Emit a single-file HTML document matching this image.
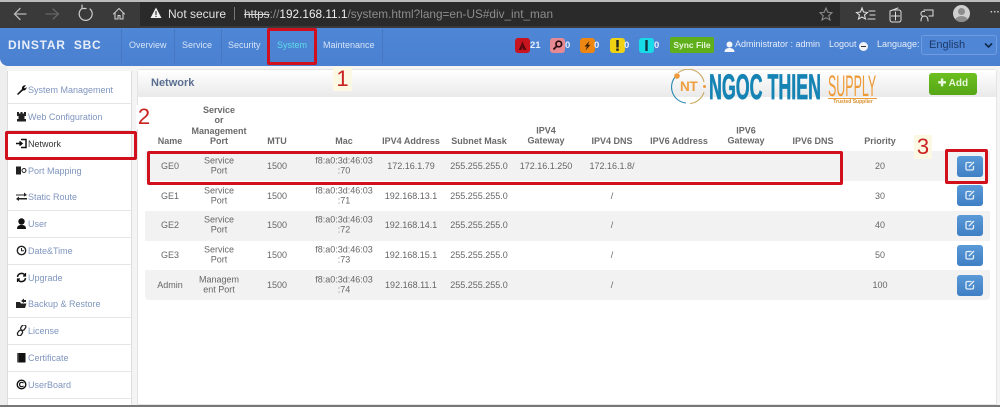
<!DOCTYPE html>
<html><head><meta charset="utf-8"><style>
html,body{margin:0;padding:0;background:#f4f4f4}
body{width:1000px;height:407px;position:relative;overflow:hidden}
#w{position:absolute;left:0;top:0;width:1000px;height:407px;overflow:hidden;background:#f4f4f4;font-family:"Liberation Sans",sans-serif;font-size:9px;color:#666;filter:blur(.35px)}
.a{position:absolute}
.c{position:absolute;transform:translate(-50%,-50%);text-align:center;white-space:nowrap;line-height:10.4px}
.h{font-weight:bold;color:#6a6a6a}
.n{position:absolute;top:40px;color:#d5e4f8;font-size:9px;white-space:nowrap}
.sep{position:absolute;top:29px;height:34px;width:1px;background:#4777c0}
.si{position:absolute;left:8px;width:123px;height:26px;background:#fff;border-bottom:1px solid #e6e6e6}
.si span{position:absolute;left:20px;top:8px;color:#7f95bf;font-size:9px;white-space:nowrap}
.si svg{position:absolute;left:8px;top:7px}
.bd{position:absolute;top:38px;width:15px;height:15px;border-radius:3px}
.bd svg{position:absolute;left:2px;top:2px}
.ct{position:absolute;top:40px;color:#e6eefa;font-size:9.500px;font-weight:bold}
.row{position:absolute;left:145px;width:845px;height:30px;background:#f2f2f2}
.btn{position:absolute;left:957px;width:26px;height:21px;border-radius:3px;background:linear-gradient(#5a9ad8,#3f7fc4)}
.btn svg{position:absolute;left:8px;top:5px}
.red{position:absolute;border:3px solid #d0101c;border-radius:2px;box-sizing:border-box}
.num{position:absolute;color:#c9231f;font-size:22px;line-height:24px;background:#fbf8e4;text-align:center}
</style></head><body><div id="w">

<!-- browser bar -->
<div class="a" style="left:0;top:0;width:1000px;height:2px;background:#bbb"></div>
<div class="a" style="left:0;top:2px;width:1000px;height:26px;background:#3a3a3a"></div>
<div class="a" style="left:140px;top:2px;width:700px;height:24px;background:#2a2a2a"></div>
<svg class="a" style="left:0;top:0" width="140" height="28" fill="none" stroke-linecap="round">
<path d="M26 14H15M20 8.500L14.500 14L20 19.500" stroke="#b8b8b8" stroke-width="1.300"/>
<path d="M46 14H58M53 9L58.500 14L53 19" stroke="#666" stroke-width="1.300"/>
<path d="M82 8.500A6.500 6.500 0 1 0 90 9M82 8.500V5M82 8.500H86" stroke="#ccc" stroke-width="1.200"/>
<path d="M113.500 14L119 8.500L124.500 14M115 13V19H118V15.500H120V19H123V13" stroke="#ccc" stroke-width="1.100"/>
</svg>
<svg class="a" style="left:150px;top:7px" width="12" height="12"><path d="M6 .5L11.500 11H.5Z" fill="#f2f2f2"/><rect x="5.400" y="4" width="1.200" height="4" fill="#333"/><rect x="5.400" y="8.800" width="1.200" height="1.200" fill="#333"/></svg>
<div class="a" style="left:168px;top:7px;font-size:12px;color:#e2e2e2;white-space:nowrap">Not secure</div>
<div class="a" style="left:234px;top:7px;width:1px;height:13px;background:#777"></div>
<div class="a" style="left:244px;top:7px;font-size:11.800px;color:#8d8d8d;white-space:nowrap"><span style="color:#d8d8d8;text-decoration:line-through">https</span>://<span style="color:#efefef">192.168.11.1</span>/system.html?lang=en-US#div_int_man</div>
<svg class="a" style="left:815px;top:3px" width="185" height="24" fill="none" stroke-linecap="round">
<path d="M11 5L12.800 9.300L17 9.800L13.800 12.700L15 17L11 14.700L7 17L8.200 12.700L5 9.800L9.200 9.300Z" stroke="#8a8a8a" stroke-width="1.100"/>
<path d="M47 5L48.500 9L52.500 9.500L49.500 12L50.500 16L47 14L43.500 16L44.500 12L41.500 9.500L45.500 9ZM54 8H60M55 12H60M53 16H60" stroke="#ddd" stroke-width="1.100"/>
<path d="M75 8.500V17C75 18 76 19 77 19H84C85 19 86 18 86 17V9C86 8 85 7 84 7H77M75 8L83 5M80.500 9V17M76.500 13H84.500" stroke="#ddd" stroke-width="1"/>
<path d="M109 7H118V13H114M106 18C106 14 108 13 109.500 13C111 13 113 14 113 18M109.500 8.500A2.500 2.500 0 1 0 109.500 13" stroke="#ddd" stroke-width="1"/>
</svg>
<div class="a" style="left:953px;top:5px;width:17px;height:17px;border-radius:50%;background:#cfcfcf;overflow:hidden"><div class="a" style="left:5px;top:3px;width:7px;height:7px;border-radius:50%;background:#8d8d8d"></div><div class="a" style="left:2px;top:11px;width:13px;height:9px;border-radius:50%;background:#8d8d8d"></div></div>
<div class="a" style="left:990px;top:7px;color:#ccc;font-size:10px;font-weight:bold">···</div>

<!-- blue header -->
<div class="a" style="left:0;top:28px;width:1000px;height:38px;background:linear-gradient(#4f86d6,#4a80cf);border-bottom-left-radius:8px"></div>
<div class="a" style="left:8px;top:38px;color:#e8eef8;font-size:12px;font-weight:bold;letter-spacing:.75px;white-space:nowrap">DINSTAR&nbsp;&nbsp;SBC</div>
<div class="sep" style="left:121px"></div><div class="sep" style="left:174px"></div><div class="sep" style="left:221px"></div><div class="sep" style="left:267px"></div><div class="sep" style="left:316px"></div><div class="sep" style="left:382px"></div>
<div class="n" style="left:129px">Overview</div>
<div class="n" style="left:182px">Service</div>
<div class="n" style="left:228px">Security</div>
<div class="n" style="left:277px;color:#5fdde8">System</div>
<div class="n" style="left:323px">Maintenance</div>

<div class="bd" style="left:515px;background:#c8141e"><svg width="11" height="11"><path d="M1.500 10L4 5L5.500 1L7 5L9.500 10H6.500L5.500 7.500L4.500 10Z" fill="#5a0a10"/></svg></div><div class="ct" style="left:530px">21</div>
<div class="bd" style="left:550px;background:#e58a92"><svg width="11" height="11" fill="none" stroke="#2a0a10" stroke-width="1.700"><circle cx="6.800" cy="4" r="2.800"/><path d="M4.800 6L1.500 9.500"/></svg></div><div class="ct" style="left:565px">0</div>
<div class="bd" style="left:580px;background:#ee8612"><svg width="11" height="11"><path d="M7.500 1L2.500 6.500H5L3.500 10.500L8.500 4.800H6Z" fill="#3a2006"/></svg></div><div class="ct" style="left:594px">0</div>
<div class="bd" style="left:610px;background:#efd312"><svg width="11" height="11"><rect x="4.300" y="0" width="2.400" height="7.500" fill="#222"/><rect x="4.300" y="8.500" width="2.400" height="2.400" fill="#222"/></svg></div><div class="ct" style="left:624px">0</div>
<div class="bd" style="left:639px;background:#18dbea"><svg width="11" height="11"><rect x="4.300" y="0" width="2.400" height="11" fill="#134"/></svg></div><div class="ct" style="left:654px">0</div>
<div class="a" style="left:670px;top:37px;width:44px;height:16px;border-radius:2px;background:#5fae1c;color:#e8f6d8;font-size:8.500px;font-weight:bold;line-height:16px;text-align:center">Sync File</div>
<svg class="a" style="left:724px;top:41px" width="11" height="12"><circle cx="5.500" cy="3.500" r="3" fill="#f4f6fa"/><path d="M.5 11C.5 8 3 7 5.500 7S10.500 8 10.500 11Z" fill="#f4f6fa"/></svg>
<div class="a" style="left:735px;top:39px;color:#e6eefa;font-size:9px;white-space:nowrap">Administrator : admin</div>
<div class="a" style="left:829px;top:39px;color:#e6eefa;font-size:9px">Logout</div>
<div class="a" style="left:859px;top:42px;width:9px;height:9px;border-radius:50%;background:#f0f4fa"><div class="a" style="left:2px;top:4px;width:5px;height:1px;background:#333"></div></div>
<div class="a" style="left:877px;top:39px;color:#e6eefa;font-size:9px">Language:</div>
<div class="a" style="left:921px;top:35px;width:76px;height:20px;box-sizing:border-box;border:1px solid #6f9ce0;border-radius:3px;background:#4f86d6;color:#1c3a6a;font-size:11px;line-height:19px;padding-left:7px">English
<svg class="a" style="left:62px;top:6px" width="9" height="7"><path d="M1 1.500L4.500 5L8 1.500" fill="none" stroke="#12284c" stroke-width="1.600"/></svg></div>

<!-- sidebar -->
<div class="a" style="left:0;top:66px;width:7px;height:341px;background:#eee"></div>
<div class="a" style="left:7px;top:71px;width:125px;height:334px;background:#fff;border-left:1px solid #ddd;border-right:1px solid #ddd;box-sizing:border-box"></div>
<div class="si" style="top:77px"><svg width="11" height="11"><path d="M1 10L6 5A3 3 0 0 1 10 1.500L8 3.500L9 4.500L10.500 3A3 3 0 0 1 7 6.500L2 11Z" fill="#111"/></svg><span>System Management</span></div>
<div class="si" style="top:104px"><svg width="11" height="11"><path d="M1 1H3V2.500H4.500V1H6.500V2.500H8V1H10V5H8.500V8H10V10.500H1V8H2.500V5H1Z" fill="#222"/></svg><span>Web Configuration</span></div>
<div class="si" style="top:131px"><svg width="11" height="11" fill="none" stroke="#111"><path d="M0 5.500H5M3.500 3.500L6 5.500L3.500 7.500" stroke-width="1.500"/><path d="M5 1.500H10V9.500H5" stroke-width="1.500"/></svg><span style="color:#333">Network</span></div>
<div class="si" style="top:158px"><svg width="11" height="11"><rect x="0" y="1.500" width="5" height="8" fill="#222"/><circle cx="8" cy="5.500" r="2" fill="none" stroke="#222"/></svg><span>Port Mapping</span></div>
<div class="si" style="top:184px"><svg width="11" height="11"><path d="M0 3.500H8V1.500L11 4L8 5.500V4.500H0ZM11 7H3V5.500L0 8L3 10V8.500H11Z" fill="#222"/></svg><span>Static Route</span></div>
<div class="si" style="top:211px"><svg width="11" height="11"><circle cx="5.500" cy="3.500" r="3.200" fill="#111"/><path d="M1 11C1 7.500 3 7 5.500 7S10 7.500 10 11Z" fill="#111"/></svg><span>User</span></div>
<div class="si" style="top:238px"><svg width="11" height="11" fill="none" stroke="#222"><circle cx="5.500" cy="5.500" r="4.200" stroke-width="1.400"/><path d="M5.500 3V5.800H8"/></svg><span>Date&amp;Time</span></div>
<div class="si" style="top:265px"><svg width="11" height="11" fill="none" stroke="#111" stroke-width="1.500"><path d="M1.500 5A4 4 0 0 1 9 3.500M9.500 6A4 4 0 0 1 2 7.500"/><path d="M9.500 1V4H7M1.500 10V7H4" stroke-width="1.200"/></svg><span>Upgrade</span></div>
<div class="si" style="top:291px"><svg width="11" height="11"><path d="M0 4H4L5 5.500H10.500L9 10H0ZM5 3L8 .5V2H10V4H8V5Z" fill="#222"/></svg><span>Backup &amp; Restore</span></div>
<div class="si" style="top:318px"><svg width="11" height="11" fill="none" stroke="#222" stroke-width="1.300"><rect x="5" y="-.5" width="4" height="6" rx="2" transform="rotate(35 7 3)"/><rect x="2" y="5" width="4" height="6" rx="2" transform="rotate(35 4 8)"/></svg><span>License</span></div>
<div class="si" style="top:345px"><svg width="11" height="11"><rect x="1" y="1" width="8.500" height="9.500" fill="#111"/><rect x="1" y="1" width="1.500" height="9.500" fill="#666"/></svg><span>Certificate</span></div>
<div class="si" style="top:372px"><svg width="11" height="11" fill="none" stroke="#111"><circle cx="5.500" cy="5.500" r="4.300" stroke-width="1.400"/><path d="M7.500 4.200A2.200 2.200 0 1 0 7.500 6.800" stroke-width="1.200"/></svg><span>UserBoard</span></div>

<!-- content panel -->
<div class="a" style="left:137px;top:69px;width:860px;height:336px;background:#fff;border:1px solid #e4e4e4;box-sizing:border-box;border-radius:3px 3px 0 0"></div>
<div class="a" style="left:138px;top:70px;width:858px;height:27px;background:linear-gradient(#fff,#e9e9e9)"></div>
<div class="a" style="left:151px;top:77px;color:#5a6f90;font-size:11px;font-weight:bold">Network</div>
<div class="a" style="left:0;top:405px;width:1000px;height:2px;background:#777"></div>

<!-- logo -->
<svg class="a" style="left:668px;top:69px" width="44" height="36" fill="none"><path d="M8 7A16 16 0 0 0 18 34" stroke="#2a86b0" stroke-width="1.100"/><path d="M10 4A16 16 0 0 1 36 13M36 23A16 16 0 0 1 22 34.500" stroke="#c9a860" stroke-width="1.100"/><circle cx="9" cy="7" r="2.800" fill="#ef9a3c"/><circle cx="36.500" cy="17.500" r="1.500" fill="#ef9a3c"/></svg>
<div class="a" style="left:680px;top:80px;color:#ef9e3e;font-size:13.500px;font-weight:bold;line-height:14px;letter-spacing:-.3px">NT</div>
<div class="a" style="left:709px;top:70px;color:#1583b4;font-size:35px;font-weight:bold;line-height:36px;transform-origin:0 0;transform:scaleX(.51);white-space:nowrap;-webkit-text-stroke:.7px #1583b4">NGOC THIEN</div>
<div class="a" style="left:828px;top:72px;color:#ee9a35;font-size:30px;line-height:30px;transform-origin:0 0;transform:scaleX(.415);white-space:nowrap">SUPPLY</div>
<div class="a" style="left:828px;top:98px;width:49px;height:1px;background:#ee9a35"></div>
<div class="a" style="left:828px;top:99px;color:#d8912f;font-size:5px;font-weight:bold;width:50px;text-align:center;white-space:nowrap;line-height:6px">Trusted Supplier</div>
<div class="a" style="left:929px;top:73px;width:48px;height:22px;border-radius:3px;background:linear-gradient(#6cc01e,#55a516);color:#eaf7dc;font-size:10px;font-weight:bold;line-height:22px;text-align:center">✚ Add</div>

<!-- table -->
<div class="row" style="top:151px"></div>
<div class="row" style="top:211px"></div>
<div class="row" style="top:270px;border-radius:0 0 4px 4px"></div>

<div class="c h" style="left:170px;top:141px">Name</div>
<div class="c h" style="left:219px;top:126px;line-height:10.400px">Service<br>or<br>Management<br>Port</div>
<div class="c h" style="left:277px;top:141px">MTU</div>
<div class="c h" style="left:344px;top:141px">Mac</div>
<div class="c h" style="left:411px;top:141px">IPV4 Address</div>
<div class="c h" style="left:479px;top:141px">Subnet Mask</div>
<div class="c h" style="left:546px;top:136px">IPV4<br>Gateway</div>
<div class="c h" style="left:612px;top:141px">IPV4 DNS</div>
<div class="c h" style="left:679px;top:141px">IPV6 Address</div>
<div class="c h" style="left:746px;top:136px">IPV6<br>Gateway</div>
<div class="c h" style="left:813px;top:141px">IPV6 DNS</div>
<div class="c h" style="left:880px;top:141px">Priority</div>

<div class="c" style="left:170px;top:166px">GE0</div><div class="c" style="left:219px;top:166px">Service<br>Port</div><div class="c" style="left:277px;top:166px">1500</div><div class="c" style="left:344px;top:166px">f8:a0:3d:46:03<br>:70</div><div class="c" style="left:411px;top:166px">172.16.1.79</div><div class="c" style="left:479px;top:166px">255.255.255.0</div><div class="c" style="left:546px;top:166px">172.16.1.250</div><div class="c" style="left:612px;top:166px">172.16.1.8/</div><div class="c" style="left:880px;top:166px">20</div>

<div class="c" style="left:170px;top:196px">GE1</div><div class="c" style="left:219px;top:196px">Service<br>Port</div><div class="c" style="left:277px;top:196px">1500</div><div class="c" style="left:344px;top:196px">f8:a0:3d:46:03<br>:71</div><div class="c" style="left:411px;top:196px">192.168.13.1</div><div class="c" style="left:479px;top:196px">255.255.255.0</div><div class="c" style="left:612px;top:196px">/</div><div class="c" style="left:880px;top:196px">30</div>

<div class="c" style="left:170px;top:225px">GE2</div><div class="c" style="left:219px;top:225px">Service<br>Port</div><div class="c" style="left:277px;top:225px">1500</div><div class="c" style="left:344px;top:225px">f8:a0:3d:46:03<br>:72</div><div class="c" style="left:411px;top:225px">192.168.14.1</div><div class="c" style="left:479px;top:225px">255.255.255.0</div><div class="c" style="left:612px;top:225px">/</div><div class="c" style="left:880px;top:225px">40</div>

<div class="c" style="left:170px;top:255px">GE3</div><div class="c" style="left:219px;top:255px">Service<br>Port</div><div class="c" style="left:277px;top:255px">1500</div><div class="c" style="left:344px;top:255px">f8:a0:3d:46:03<br>:73</div><div class="c" style="left:411px;top:255px">192.168.15.1</div><div class="c" style="left:479px;top:255px">255.255.255.0</div><div class="c" style="left:612px;top:255px">/</div><div class="c" style="left:880px;top:255px">50</div>

<div class="c" style="left:170px;top:285px">Admin</div><div class="c" style="left:219px;top:285px">Managem<br>ent Port</div><div class="c" style="left:277px;top:285px">1500</div><div class="c" style="left:344px;top:285px">f8:a0:3d:46:03<br>:74</div><div class="c" style="left:411px;top:285px">192.168.11.1</div><div class="c" style="left:479px;top:285px">255.255.255.0</div><div class="c" style="left:612px;top:285px">/</div><div class="c" style="left:880px;top:285px">100</div>

<div class="btn" style="top:156px"><svg width="10" height="10" fill="none" stroke="#e4effa" stroke-width="1.300"><path d="M6.500 1.500H2.500Q1 1.500 1 3V7.500Q1 9 2.500 9H7Q8.500 9 8.500 7.500V5M3.800 6.200L9 1"/></svg></div>
<div class="btn" style="top:185px"><svg width="10" height="10" fill="none" stroke="#e4effa" stroke-width="1.300"><path d="M6.500 1.500H2.500Q1 1.500 1 3V7.500Q1 9 2.500 9H7Q8.500 9 8.500 7.500V5M3.800 6.200L9 1"/></svg></div>
<div class="btn" style="top:215px"><svg width="10" height="10" fill="none" stroke="#e4effa" stroke-width="1.300"><path d="M6.500 1.500H2.500Q1 1.500 1 3V7.500Q1 9 2.500 9H7Q8.500 9 8.500 7.500V5M3.800 6.200L9 1"/></svg></div>
<div class="btn" style="top:245px"><svg width="10" height="10" fill="none" stroke="#e4effa" stroke-width="1.300"><path d="M6.500 1.500H2.500Q1 1.500 1 3V7.500Q1 9 2.500 9H7Q8.500 9 8.500 7.500V5M3.800 6.200L9 1"/></svg></div>
<div class="btn" style="top:275px"><svg width="10" height="10" fill="none" stroke="#e4effa" stroke-width="1.300"><path d="M6.500 1.500H2.500Q1 1.500 1 3V7.500Q1 9 2.500 9H7Q8.500 9 8.500 7.500V5M3.800 6.200L9 1"/></svg></div>

<!-- annotations -->
<div class="red" style="left:267px;top:28px;width:50px;height:37px"></div>
<div class="red" style="left:5px;top:131px;width:132px;height:29px"></div>
<div class="red" style="left:147px;top:151px;width:696px;height:34px"></div>
<div class="red" style="left:945px;top:149px;width:43px;height:35px"></div>
<div class="num" style="left:333px;top:67px;width:19px">1</div>
<div class="num" style="left:136px;top:105px;width:16px;background:#fff">2</div>
<div class="num" style="left:914px;top:135px;width:18px">3</div>
</div></body></html>
